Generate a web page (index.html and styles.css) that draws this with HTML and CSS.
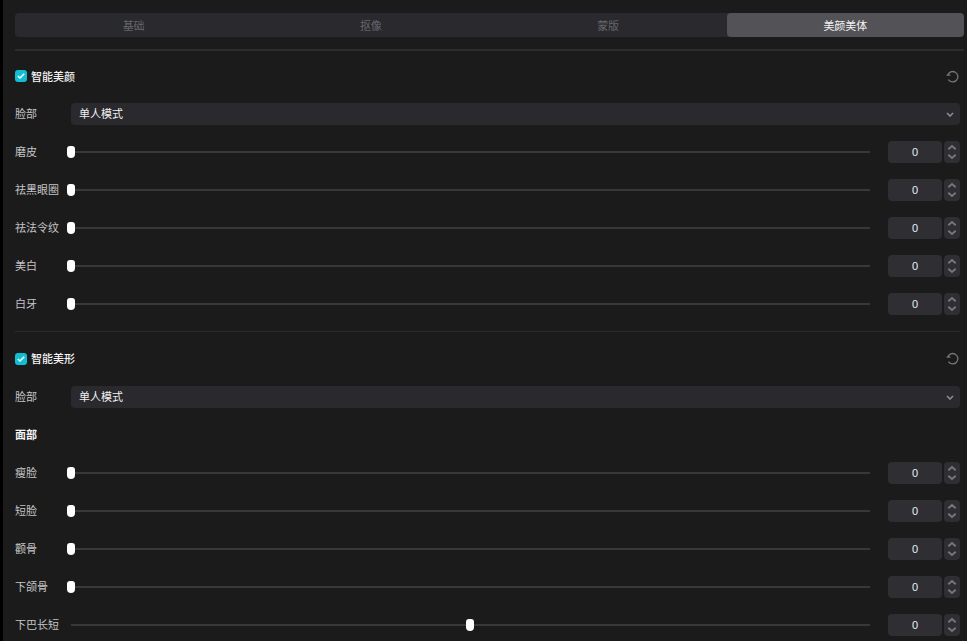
FILE: index.html
```html
<!DOCTYPE html>
<html lang="zh-CN">
<head>
<meta charset="utf-8">
<title>美颜美体</title>
<link rel="stylesheet" href="styles.css">
</head>
<body>
<svg class="defs" width="0" height="0" aria-hidden="true">
  <symbol id="reset" viewBox="0 0 13 13"><path d="M.6 5.2H4.4M1.7 5.2A5.2 5.2 0 1 1 2.4 9.7" fill="none" stroke="currentColor" stroke-width="1.3"/></symbol>
  <symbol id="check" viewBox="0 0 12 12"><path d="M2.8 6 5 8 9.2 3.8" fill="none" stroke="#fff" stroke-width="1.6"/></symbol>
  <symbol id="down" viewBox="0 0 8 5"><path d="M1 1 4 4 7 1" fill="none" stroke="currentColor" stroke-width="1.6"/></symbol>
  <symbol id="updown" viewBox="0 0 16 22"><path d="M4.3 8.2 8 5 11.7 8.2M4.3 13.8 8 17 11.7 13.8" fill="none" stroke="currentColor" stroke-width="1.9"/></symbol>
</svg>
<main class="panel">
  <nav class="tabs">
    <div class="tab">基础</div>
    <div class="tab">抠像</div>
    <div class="tab">蒙版</div>
    <div class="tab tab-active">美颜美体</div>
  </nav>
  <div class="rule"></div>

  <section class="section">
    <div class="row head">
      <span class="check"><svg width="12" height="12"><use href="#check"/></svg></span>
      <span class="title">智能美颜</span>
      <svg class="reset" width="13" height="13"><use href="#reset"/></svg>
    </div>
    <div class="row">
      <span class="label">脸部</span>
      <div class="select"><span class="select-text">单人模式</span><svg class="caret" width="8" height="5"><use href="#down"/></svg></div>
    </div>
    <div class="row"><span class="label">磨皮</span><div class="slider"><i class="thumb"></i></div><div class="num">0</div><div class="step"><svg width="16" height="22"><use href="#updown"/></svg></div></div>
    <div class="row"><span class="label">祛黑眼圈</span><div class="slider"><i class="thumb"></i></div><div class="num">0</div><div class="step"><svg width="16" height="22"><use href="#updown"/></svg></div></div>
    <div class="row"><span class="label">祛法令纹</span><div class="slider"><i class="thumb"></i></div><div class="num">0</div><div class="step"><svg width="16" height="22"><use href="#updown"/></svg></div></div>
    <div class="row"><span class="label">美白</span><div class="slider"><i class="thumb"></i></div><div class="num">0</div><div class="step"><svg width="16" height="22"><use href="#updown"/></svg></div></div>
    <div class="row"><span class="label">白牙</span><div class="slider"><i class="thumb"></i></div><div class="num">0</div><div class="step"><svg width="16" height="22"><use href="#updown"/></svg></div></div>
  </section>

  <div class="rule-thin"></div>

  <section class="section">
    <div class="row head head-second">
      <span class="check"><svg width="12" height="12"><use href="#check"/></svg></span>
      <span class="title">智能美形</span>
      <svg class="reset" width="13" height="13"><use href="#reset"/></svg>
    </div>
    <div class="row">
      <span class="label">脸部</span>
      <div class="select"><span class="select-text">单人模式</span><svg class="caret" width="8" height="5"><use href="#down"/></svg></div>
    </div>
    <div class="row"><span class="group">面部</span></div>
    <div class="row"><span class="label">瘦脸</span><div class="slider"><i class="thumb"></i></div><div class="num">0</div><div class="step"><svg width="16" height="22"><use href="#updown"/></svg></div></div>
    <div class="row"><span class="label">短脸</span><div class="slider"><i class="thumb"></i></div><div class="num">0</div><div class="step"><svg width="16" height="22"><use href="#updown"/></svg></div></div>
    <div class="row"><span class="label">颧骨</span><div class="slider"><i class="thumb"></i></div><div class="num">0</div><div class="step"><svg width="16" height="22"><use href="#updown"/></svg></div></div>
    <div class="row"><span class="label">下颌骨</span><div class="slider"><i class="thumb"></i></div><div class="num">0</div><div class="step"><svg width="16" height="22"><use href="#updown"/></svg></div></div>
    <div class="row"><span class="label">下巴长短</span><div class="slider"><i class="thumb thumb-mid"></i></div><div class="num">0</div><div class="step"><svg width="16" height="22"><use href="#updown"/></svg></div></div>
  </section>
</main>
</body>
</html>
```

FILE: styles.css
```css
* { box-sizing: border-box; }
html, body { margin: 0; height: 100%; overflow: hidden; background: #1b1b1c; }
body {
  font-family: "Noto Sans CJK SC", "Liberation Sans", sans-serif;
  font-size: 11px;
  color: #c4c4c6;
}
.defs { position: absolute; }
.panel {
  height: 641px;
  border-left: 3px solid #000;
  padding: 13px 3px 0 12px;
  overflow: hidden;
}
.tabs { display: grid; grid-template-columns: repeat(4, 1fr); height: 24px; background: #29292e; border-radius: 4px; }
.tab { display: flex; align-items: center; justify-content: center; color: #66666a; border-radius: 4px; }
.tab-active { background: #525257; color: #f2f2f2; }
.rule { height: 2px; margin: 12px 0 6px; background: #2c2c2f; }
.rule-thin { height: 1px; margin: 8px 4px 8px 0; background: #2c2c2f; }
.section { padding-right: 4px; }
.row { display: flex; align-items: center; height: 38px; }
.check { display: flex; width: 12px; height: 12px; margin-right: 4px; background: #10bfd2; border-radius: 3px; }
.title { flex: 1; font-weight: 500; color: #f4f4f4; }
.head-second .title { padding-bottom: 2px; }
.head-second .reset { margin-bottom: 2px; }
.group { font-weight: 700; color: #f4f4f4; padding-bottom: 2px; }
.reset { color: #77777a; margin-right: 1px; }
.label { flex: 0 0 56px; white-space: nowrap; padding-bottom: 2px; }
.select {
  flex: 1; display: flex; align-items: center; justify-content: space-between;
  height: 22px; padding: 0 6px 0 8px; background: #29292e; border-radius: 4px; color: #f0f0f0;
}
.select-text { padding-bottom: 2px; }
.caret { color: #8e8e90; }
.slider { position: relative; flex: 1; height: 2px; background: #38383c; margin-right: 18px; }
.thumb { position: absolute; left: -4px; top: -5px; width: 8px; height: 12px; background: #fff; border-radius: 3px 3px 4px 4px; }
.thumb-mid { left: calc(50% - 5px); }
.num {
  display: flex; align-items: center; justify-content: center;
  flex: 0 0 54px; height: 22px; background: #2e2e33; border-radius: 4px; color: #e6eefa;
  font-family: "Liberation Sans", sans-serif;
}
.step { flex: 0 0 16px; height: 22px; margin-left: 2px; background: #2e2e33; border-radius: 4px; color: #77777b; }
.step svg { display: block; }
```
